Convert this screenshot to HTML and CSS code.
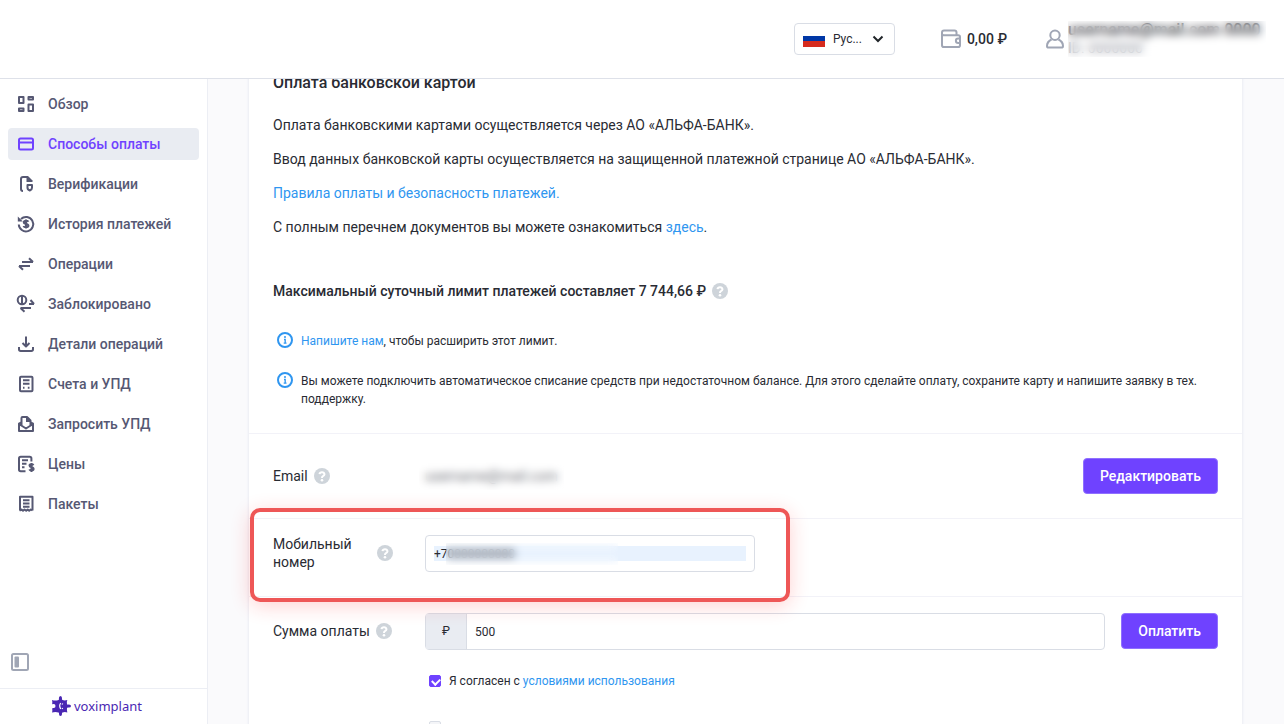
FILE: index.html
```html
<!DOCTYPE html>
<html lang="ru">

<head>
    <meta charset="UTF-8">
    <meta name="viewport" content="width=device-width, initial-scale=1.0">
    <title>Способы оплаты</title>
    <link rel="stylesheet" href="styles.css">
</head>

<body>
    <svg class="sprite" aria-hidden="true">
        <symbol id="help" viewBox="0 0 16 16">
            <circle cx="8" cy="8" r="8" fill="#ced4da" />
            <path d="M5.500 6.200Q5.800 4.200 8 4.200T10.500 6.300Q10.500 7.500 9 8.200Q8 8.700 8 9.900" fill="none" stroke="#fff" stroke-width="2" />
            <circle cx="8" cy="12.200" r="1.300" fill="#fff" />
        </symbol>
        <symbol id="info" viewBox="0 0 16 16">
            <circle cx="8" cy="8" r="7" fill="none" stroke="#2f96f0" stroke-width="2" />
            <path d="M7 7.500h1.200v3.700M6.700 11.200h2.800" fill="none" stroke="#2f96f0" stroke-width="1.300" />
            <circle cx="8" cy="5" r="1" fill="#2f96f0" />
        </symbol>
    </svg>

    <header class="topbar">
        <div class="lang">
            <svg class="lang-flag" viewBox="0 0 22 15">
                <path fill="#fff" d="M0 0h22v5H0z" />
                <path fill="#0037a6" d="M0 4h22v6H0z" />
                <path fill="#d62b1e" d="M0 9h22v6H0z" />
            </svg>
            <select class="lang-select" aria-label="Язык">
                <option>Рус...</option>
            </select>
            <svg class="lang-arrow" viewBox="0 0 12 8">
                <path d="M1.500 1.500L6 6l4.500-4.500" fill="none" stroke="#212529" stroke-width="2" />
            </svg>
        </div>
        <div class="balance">
            <svg class="top-icon" viewBox="0 0 22 20" fill="none" stroke="#a0a6b5" stroke-width="2">
                <path d="M2 3.500v12.700q0 1.800 1.800 1.800h14.400q1.800 0 1.800-1.800V8q0-1.800-1.800-1.800H3.800Q2 6.200 2 4.500v-1Q2 1.500 4 1.500h10.500q2 0 2 2v2.700" />
                <path d="M20.500 9.500h-2.300a2.300 2.300 0 0 0 0 4.600h2.300" />
            </svg>
            <span>0,00 ₽</span>
        </div>
        <div class="user">
            <svg class="top-icon" viewBox="0 0 20 20" fill="none" stroke="#a0a6b5" stroke-width="2">
                <circle cx="10" cy="6.300" r="4.700" />
                <path d="M6.500 10.500C3.500 12 2 14.500 2 17q0 1.600 1.600 1.600h12.800Q18 18.600 18 17c0-2.500-1.500-5-4.500-6.500" />
            </svg>
            <div class="user-info masked">
                <div class="user-name">username@mail.com 0000</div>
                <div class="user-id">ID: 0000000</div>
            </div>
        </div>
    </header>

    <div class="layout">
        <aside class="sidebar">
            <nav class="menu">
                <a class="menu-item" href="#">
                    <svg viewBox="0 0 20 20"><path d="M3 3h4.500v6H3zM12.500 3H17v2.500h-4.500zM12.500 10.500H17V17h-4.500zM3 14.500h4.500V17H3z" /></svg>
                    Обзор
                </a>
                <a class="menu-item active" href="#">
                    <svg viewBox="0 0 20 20"><rect x="3" y="4.500" width="14" height="11" rx="1.500" /><path d="M3 8.500h14" /></svg>
                    Способы оплаты
                </a>
                <a class="menu-item" href="#">
                    <svg viewBox="0 0 20 20"><path d="M7 17Q5 17 5 15V5Q5 3 7 3h4.500" /><path class="fill" d="M10.500 2h1.500l4.500 4.500V8h-6z" /><path d="M11.500 11h4.500v2.700q0 2-2.200 2.800-2.300-.8-2.300-2.800z" /></svg>
                    Верификации
                </a>
                <a class="menu-item" href="#">
                    <svg viewBox="0 0 20 20"><path d="M5 5A7.200 7.200 0 1 1 2.800 10.500" /><path class="fill" d="M1.800 2.500v5h5z" /><path d="M12.400 7.800q-.6-1-2.400-1-2.200 0-2.200 1.500 0 1.200 2.200 1.600 2.400.4 2.400 1.800T10 13.300q-2 0-2.500-1.300M10 5.500v9" /></svg>
                    История платежей
                </a>
                <a class="menu-item" href="#">
                    <svg viewBox="0 0 20 20"><path d="M6 8h11M13 4.200L17 8M14 12H3M3 12l4 3.800" /></svg>
                    Операции
                </a>
                <a class="menu-item" href="#">
                    <svg viewBox="0 0 20 20"><circle cx="6" cy="6" r="4.300" /><path d="M6 2v8M13 10h5M14.500 6l3.500 4M15 14H4.500M4.500 14l4 3.700" /></svg>
                    Заблокировано
                </a>
                <a class="menu-item" href="#">
                    <svg viewBox="0 0 20 20"><path d="M10 2.500v10M6.500 9l3.500 3.500L13.500 9M3 13v2.300Q3 17 4.700 17h10.600q1.700 0 1.700-1.700V13" /></svg>
                    Детали операций
                </a>
                <a class="menu-item" href="#">
                    <svg viewBox="0 0 20 20"><rect x="4" y="2.800" width="12.500" height="14.500" rx="1" /><path d="M7 6.300h6.500M7 9.700h6.500M7 13.800h1.500M11.800 13.800h1.700" /></svg>
                    Счета и УПД
                </a>
                <a class="menu-item" href="#">
                    <svg viewBox="0 0 20 20"><path d="M5 8.500L3 9.700V17h14V9.700l-2-1.200M3 10l7 4.500 7-4.500M5.500 11V4q0-1 1-1H11l3.500 3.500V11" /><path class="fill" d="M10 2.500V8h5V7z" /></svg>
                    Запросить УПД
                </a>
                <a class="menu-item" href="#">
                    <svg viewBox="0 0 20 20"><path d="M9.500 17.300H4.700Q3 17.300 3 15.600V4.500Q3 2.800 4.700 2.800h9q1.700 0 1.700 1.700v3M6 6.300h6M6 9.700h4.500M6 13.300h2.500M17.500 11.200q-.6-.9-2-.9-2 0-2 1.300t2 1.600q2.100.3 2.100 1.700t-2.100 1.500q-1.700 0-2.200-1M15.500 9v9" /></svg>
                    Цены
                </a>
                <a class="menu-item" href="#">
                    <svg viewBox="0 0 20 20"><path d="M4 16.500V2.800h12.500v13.700M3.500 16.500l2-1 1.500 1.300 1.500-1.300 1.700 1.300 1.500-1.300 1.500 1.300 1.500-1.300 1.800 1M7 6.300h6.500M7 9.500h6.500M7 12.700h6.500" /></svg>
                    Пакеты
                </a>
            </nav>
            <button class="collapse" type="button" aria-label="Свернуть меню">
                <svg viewBox="0 0 20 20"><rect x="2" y="2" width="16" height="16" rx="1.500" fill="none" stroke="#a0a6b5" stroke-width="2" /><rect x="4.500" y="4.500" width="4.500" height="11" rx="1" fill="#a0a6b5" /></svg>
            </button>
            <a class="brand" href="#">
                <svg viewBox="0 0 20 20"><path fill="#4a27b3" d="M1 4q3.500 1 6.500 0 .8-.3.400-1.500Q7.800 0 9.500 0T11 2.500q-.3 1.200.5 1.500 2 .8 4.800 0-.8 2-.3 4 .3 1 1.500.5Q20 8.300 20 10t-2.500 1.500q-1.200-.4-1.500.5-.3 2.500.3 4.500-2.500-.8-4.800 0-.8.300-.5 1.500Q11 20 9.500 20T8 18q.3-1.200-.5-1.500-3-.8-6.500 0 .6-2 .2-4 .3-.8 1.300-.4 2 .2 2-2t-2-2Q1.300 8.500 1.200 7.700 1.600 6 1 4z" /><path d="M9.700 7q-2 2.500 0 6M11 8.500l.8-1M11 12l.8 1" fill="none" stroke="#fff" stroke-width="1.200" /></svg>
                <span>voximplant</span>
            </a>
        </aside>

        <main class="content">
            <div class="card">
                <section class="intro">
                    <h2>Оплата банковской картой</h2>
                    <p>Оплата банковскими картами осуществляется через АО «АЛЬФА-БАНК».</p>
                    <p>Ввод данных банковской карты осуществляется на защищенной платежной странице АО «АЛЬФА-БАНК».</p>
                    <p><a href="#">Правила оплаты и безопасность платежей.</a></p>
                    <p>С полным перечнем документов вы можете ознакомиться <a href="#">здесь</a>.</p>

                    <h3>Максимальный суточный лимит платежей составляет 7 744,66 ₽ <svg class="icon"><use href="#help" /></svg></h3>

                    <div class="note">
                        <svg class="icon"><use href="#info" /></svg>
                        <span><a href="#">Напишите нам</a>, чтобы расширить этот лимит.</span>
                    </div>
                    <div class="note">
                        <svg class="icon"><use href="#info" /></svg>
                        <span>Вы можете подключить автоматическое списание средств при недостаточном балансе. Для этого сделайте оплату, сохраните карту и напишите заявку в тех. поддержку.</span>
                    </div>
                </section>

                <!-- Email -->
                <section class="row row-email">
                    <div class="row-label">
                        <span>Email</span>
                        <svg class="icon"><use href="#help" /></svg>
                    </div>
                    <div class="row-value"><span class="email masked">username@mail.com</span></div>
                    <button class="btn" type="button">Редактировать</button>
                </section>

                <!-- Телефон -->
                <section class="row row-phone">
                    <div class="row-label">
                        <label for="phone">Мобильный номер</label>
                        <svg class="icon"><use href="#help" /></svg>
                    </div>
                    <div class="phone">
                        <input type="tel" id="phone" value="+70000000000">
                        <span class="phone-mask"></span>
                    </div>
                    <div class="highlight"></div>
                </section>

                <!-- Сумма -->
                <section class="row row-sum">
                    <div class="row-label">
                        <label for="sum">Сумма оплаты</label>
                        <svg class="icon"><use href="#help" /></svg>
                    </div>
                    <div class="sum">
                        <span class="sum-currency">₽</span>
                        <input type="text" id="sum" value="500">
                    </div>
                    <button class="btn" type="button">Оплатить</button>
                </section>

                <div class="checks">
                    <div class="check">
                        <input type="checkbox" id="agree" checked>
                        <label for="agree">Я согласен с <a href="#">условиями использования</a></label>
                    </div>
                    <div class="check">
                        <input type="checkbox" id="save" aria-label="Сохранить карту">
                    </div>
                </div>
            </div>
        </main>
    </div>
</body>

</html>
```
FILE: styles.css
```css
* {
    margin: 0;
    padding: 0;
    box-sizing: border-box;
}

body {
    font-family: Roboto, "Noto Sans", sans-serif;
    font-size: 14px;
    line-height: 20px;
    color: #292b33;
    background-color: #fafafc;
    display: flex;
    flex-direction: column;
    height: 100vh;
    overflow: hidden;
}

a {
    color: #2f96f0;
    text-decoration: none;
}

input,
select,
button {
    font-family: inherit;
    color: inherit;
}

.sprite {
    display: none;
}

.icon {
    width: 16px;
    height: 16px;
    flex: none;
}

/* Скрытые личные данные */
.masked {
    position: relative;
    overflow: hidden;
}

.masked::after {
    content: "";
    position: absolute;
    inset: 0;
    backdrop-filter: blur(4px);
}

/* Шапка */
.topbar {
    flex: none;
    display: flex;
    justify-content: flex-end;
    align-items: center;
    height: 79px;
    padding-right: 18px;
    background-color: #fff;
    border-bottom: 1px solid #dee1e9;
}

.lang {
    display: flex;
    align-items: center;
    width: 101px;
    height: 32px;
    padding: 0 10px 0 8px;
    margin-right: 45px;
    border: 1px solid #d9dde5;
    border-radius: 4px;
}

.lang-flag {
    width: 22px;
    height: 15px;
    margin-right: 8px;
}

.lang-select {
    flex: 1;
    min-width: 0;
    appearance: none;
    border: none;
    background: none;
    font-size: 12px;
}

.lang-arrow {
    width: 12px;
    height: 8px;
}

.balance {
    display: flex;
    align-items: center;
    gap: 5px;
    margin-right: 37px;
    font-weight: 500;
}

.top-icon {
    width: 22px;
    height: 20px;
}

.user {
    display: flex;
    align-items: center;
    gap: 2px;
}

.user-info {
    width: 198px;
    height: 36px;
    line-height: 18px;
    white-space: nowrap;
}

.user-name {
    font-weight: 500;
    font-size: 16px;
}

.user-id {
    font-size: 14px;
    color: #8d919c;
}

/* Боковое меню */
.layout {
    flex: 1;
    display: flex;
    min-height: 0;
}

.sidebar {
    flex: none;
    display: flex;
    flex-direction: column;
    width: 208px;
    background-color: #fff;
    border-right: 1px solid #eceef4;
}

.menu {
    flex: 1;
    display: flex;
    flex-direction: column;
    gap: 8px;
    padding: 9px 8px;
}

.menu-item {
    display: flex;
    align-items: center;
    gap: 12px;
    height: 32px;
    padding: 0 8px;
    border-radius: 4px;
    font-weight: 500;
    color: #565873;
}

.menu-item svg {
    width: 20px;
    height: 20px;
    fill: none;
    stroke: currentColor;
    stroke-width: 2;
    stroke-linejoin: round;
}

.menu-item .fill {
    fill: currentColor;
    stroke: none;
}

.menu-item.active {
    background-color: #e9ecf2;
    color: #6f42ff;
}

.collapse {
    width: 20px;
    height: 20px;
    margin: 0 0 16px 10px;
    border: none;
    background: none;
}

.brand {
    display: flex;
    align-items: center;
    justify-content: center;
    gap: 3px;
    height: 36px;
    padding: 0 14px 2px 0;
    border-top: 1px solid #eceef4;
    font-family: "Noto Sans", sans-serif;
    font-size: 13px;
    color: #4a27b3;
}

.brand svg {
    width: 20px;
    height: 20px;
}

/* Карточка оплаты */
.content {
    flex: 1;
    padding: 0 41px 0 40px;
    overflow: hidden;
}

.card {
    margin-top: -24px;
    background-color: #fff;
    border: 1px solid #f0f1f6;
    box-shadow: 0 0 2px #eceef4;
}

.intro {
    padding: 17px 24px 25px;
}

.intro h2 {
    margin-bottom: 22px;
    font-size: 16px;
    font-weight: 500;
}

.intro p {
    margin-bottom: 14px;
}

.intro h3 {
    display: flex;
    align-items: center;
    gap: 6px;
    margin: 44px 0 31px;
    font-size: 14px;
    font-weight: 500;
}

.note {
    display: flex;
    gap: 8px;
    margin-bottom: 22px;
    padding-left: 4px;
    font-size: 12px;
    line-height: 18px;
}

.note:last-child {
    margin-bottom: 0;
}

.row {
    display: flex;
    align-items: flex-start;
    padding: 16px 24px;
    border-top: 1px solid #f2f2f8;
}

.row-label {
    flex: none;
    display: flex;
    align-items: center;
    gap: 6px;
    width: 120px;
    height: 36px;
    margin-right: 32px;
    line-height: 18px;
}

.row-value {
    flex: 1;
    display: flex;
    align-items: center;
    height: 36px;
}

.email {
    padding: 4px 6px;
    margin-left: -6px;
    color: #6c6e76;
}

.row-email {
    padding: 24px;
}

.row-phone {
    position: relative;
    padding-bottom: 24px;
}

.btn {
    height: 36px;
    padding: 0 16px;
    border: 1px solid #8f70ff;
    border-radius: 4px;
    background-color: #6f42ff;
    color: #fff;
    font-size: 14px;
    font-weight: 500;
}

.phone {
    position: relative;
    display: flex;
    align-items: center;
    width: 330px;
    height: 37px;
    padding: 0 8px;
    border: 1px solid #d9dde5;
    border-radius: 4px;
}

.phone input {
    width: 100%;
    height: 15px;
    border: none;
    background-color: #e8f2fe;
    font-size: 12px;
}

.phone-mask {
    position: absolute;
    top: 7px;
    left: 20px;
    width: 172px;
    height: 22px;
    backdrop-filter: blur(4px);
}

/* Красная рамка вокруг номера */
.highlight {
    position: absolute;
    top: -11px;
    bottom: -6px;
    left: 1px;
    width: 540px;
    border: 4px solid #ee5757;
    border-radius: 10px;
    box-shadow: 0 4px 20px rgba(255, 30, 30, 0.2);
    pointer-events: none;
}

.sum {
    flex: 1;
    display: flex;
    height: 37px;
    margin-right: 16px;
    border: 1px solid #d9dde5;
    border-radius: 4px;
}

.sum-currency {
    width: 41px;
    line-height: 35px;
    text-align: center;
    font-size: 12px;
    background-color: #e9ecf2;
    border-right: 1px solid #d9dde5;
}

.sum input {
    flex: 1;
    padding: 0 8px;
    border: none;
    border-radius: 4px;
    background: none;
    font-size: 12px;
}

.checks {
    display: flex;
    flex-direction: column;
    gap: 28px;
    padding: 6px 24px 24px 180px;
}

.check {
    display: flex;
    align-items: center;
    gap: 8px;
    min-height: 18px;
    font-size: 12px;
    line-height: 18px;
}

.check input {
    position: relative;
    width: 12px;
    height: 12px;
    appearance: none;
    border: 1px solid #d9dde5;
    border-radius: 2px;
    background-color: #f4f5f8;
}

.check input:checked {
    border-color: #6f42ff;
    background-color: #6f42ff;
}

.check input:checked::after {
    content: "";
    position: absolute;
    top: 2px;
    left: 2px;
    width: 6px;
    height: 4px;
    border: solid #fff;
    border-width: 0 0 2px 2px;
    transform: rotate(-45deg);
}
```
